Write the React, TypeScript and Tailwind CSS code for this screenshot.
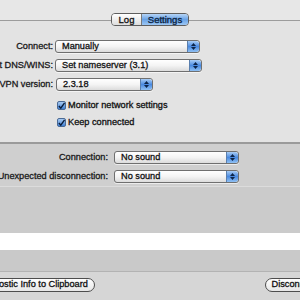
const font = { fontFamily: '"Liberation Sans", Arial, sans-serif' };

const Stepper = () => (
  <div className="w-[12px] h-full rounded-r-[3px] bg-gradient-to-b from-[#a9cdf5] via-[#4a8ae0] to-[#8fc0f3] border-l border-[#5a7fae] flex flex-col items-center justify-center gap-[1px]">
    <svg width="5" height="3" viewBox="0 0 5 3"><path d="M0 3 L2.5 0 L5 3 Z" fill="#0c2448" /></svg>
    <svg width="5" height="3" viewBox="0 0 5 3"><path d="M0 0 L2.5 3 L5 0 Z" fill="#0c2448" /></svg>
  </div>
);

const Popup = ({ value, className }: { value: string; className: string }) => (
  <div
    className={`h-[13px] flex items-stretch rounded-[3px] border border-[#6f6f6f] bg-gradient-to-b from-white via-[#f4f4f4] to-[#dcdcdc] shadow-[0_1px_0_rgba(255,255,255,0.6)] ${className}`}
  >
    <span className="flex-1 pl-[6px] text-[9.2px] leading-[11px] text-[#111] whitespace-nowrap overflow-hidden [-webkit-text-stroke:0.3px]">
      {value}
    </span>
    <Stepper />
  </div>
);

const Label = ({ text }: { text: string }) => (
  <div className="flex justify-end items-center h-[13px] min-w-0">
    <span className="whitespace-nowrap text-[9.2px] text-[#1a1a1a] shrink-0 [-webkit-text-stroke:0.3px]">{text}</span>
  </div>
);

const Check = ({ text }: { text: string }) => (
  <div className="flex items-center gap-[2px] h-[9px] pl-[57px]">
    <div className="w-[9px] h-[9px] rounded-[2px] border border-[#4a6a95] bg-gradient-to-b from-[#a8cbf3] to-[#3f7fd3] flex items-center justify-center">
      <svg width="8" height="8" viewBox="0 0 8 8">
        <path d="M1 4 L3.2 6.5 L7.5 0.5" stroke="#0a1d3a" strokeWidth="1.6" fill="none" />
      </svg>
    </div>
    <span className="text-[9.2px] text-[#111] whitespace-nowrap [-webkit-text-stroke:0.3px]">{text}</span>
  </div>
);

const Button = ({ text, className }: { text: string; className: string }) => (
  <div
    className={`h-[14px] flex items-center justify-center rounded-full border border-[#4d4d4d] bg-gradient-to-b from-white to-[#e6e6e6] px-[6px] text-[9.2px] text-[#111] whitespace-nowrap shrink-0 [-webkit-text-stroke:0.3px] ${className}`}
  >
    {text}
  </div>
);

export default function App() {
  return (
    <div className="w-[300px] h-[300px] overflow-hidden flex flex-col bg-[#e7e7e7]" style={font}>
      {/* settings box */}
      <div className="mt-[20px] h-[124px] border-t border-[#9c9c9c] border-b-2 border-b-[#9a9a9a] bg-[#e3e3e3] flex flex-col">
        <div className="flex justify-center -mt-[8px]">
          <div className="flex h-[13px] w-[78px] rounded-[4px] border border-[#5e5e5e] overflow-hidden text-[9.5px] leading-[11px] [-webkit-text-stroke:0.3px]">
            <div className="w-[30px] flex items-center justify-center bg-gradient-to-b from-white to-[#dedede] border-r border-[#7a7a7a] text-[#111]">
              Log
            </div>
            <div className="flex-1 flex items-center justify-center bg-gradient-to-b from-[#b6d5f7] via-[#6aa3e6] to-[#9cc7f5] text-[#0b1f3d]">
              Settings
            </div>
          </div>
        </div>

        <div className="mt-[14px] grid grid-cols-[53px_1fr] gap-x-[2px] gap-y-[6px]">
          <Label text="Connect:" />
          <Popup value="Manually" className="w-[145px]" />
          <Label text="Set DNS/WINS:" />
          <Popup value="Set nameserver (3.1)" className="w-[147px]" />
          <Label text="OpenVPN version:" />
          <Popup value="2.3.18" className="w-[97px] ml-[1px]" />
        </div>

        <div className="mt-[10px] flex flex-col gap-[8px]">
          <Check text="Monitor network settings" />
          <Check text="Keep connected" />
        </div>
      </div>

      {/* sounds */}
      <div className="h-[43px] bg-[#cfcfcf] border-b border-[#dcdcdc] pt-[7px] grid grid-cols-[108px_1fr] gap-x-[6px] gap-y-[6px] content-start">
        <Label text="Connection:" />
        <Popup value="No sound" className="w-[125px]" />
        <Label text="Unexpected disconnection:" />
        <Popup value="No sound" className="w-[125px]" />
      </div>

      <div className="h-[46px] bg-[#cbcbcb]" />
      <div className="h-[17px] bg-white" />
      <div className="h-[22px] bg-[#c9c9c9] border-b border-[#b3b3b3]" />

      {/* bottom bar */}
      <div className="flex-1 bg-[#d6d6d6] flex items-start justify-between pt-[6px]">
        <Button text="Copy Diagnostic Info to Clipboard" className="-ml-[56px]" />
        <Button text="Disconnect" className="-mr-[24px]" />
      </div>
    </div>
  );
}
